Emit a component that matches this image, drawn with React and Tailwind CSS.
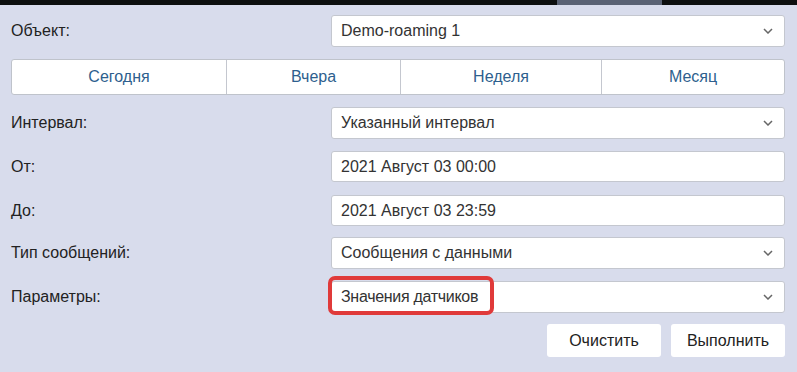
import React from "react";

const Chevron = () => (
  <svg width="10" height="6" viewBox="0 0 10 6" className="absolute right-[11px] top-1/2 -translate-y-1/2">
    <path d="M1 1l4 4 4-4" fill="none" stroke="#666" strokeWidth="1.5" />
  </svg>
);

const Select = ({ children }) => (
  <div className="relative flex h-[32px] w-[454px] items-center rounded-[3px] border border-[#c4c7cf] bg-white pl-[9px] text-[16px] text-[#333]">
    {children}
    <Chevron />
  </div>
);

const Input = ({ children }) => (
  <div className="flex h-[31px] w-[454px] items-center rounded-[3px] border border-[#c4c7cf] bg-white pl-[9px] text-[16px] text-[#333]">
    {children}
  </div>
);

const Row = ({ label, children, className = "" }) => (
  <div className={"flex items-center justify-between " + className}>
    <span className="text-[16px] text-[#222]">{label}</span>
    {children}
  </div>
);

export default function App() {
  return (
    <div className="h-[372px] w-[797px] overflow-hidden bg-[#d8dcec]" style={{ fontFamily: '"Liberation Sans", Arial, sans-serif' }}>
      <div className="flex h-[5px] bg-[#0d0f0f]">
        <div className="ml-[557px] h-full w-[105px] bg-[#5a6274]" />
      </div>
      <div className="flex flex-col pl-[11px] pr-[12px] pt-[10px]">
        <Row label="Объект:">
          <Select>Demo-roaming 1</Select>
        </Row>
        <div className="mt-[12px] flex h-[36px] overflow-hidden rounded-[3px] border border-[#bfc3cb] bg-white text-[16px] text-[#2e5f8e]">
          <div className="flex w-[215px] items-center justify-center border-r border-[#c4c7cf]">Сегодня</div>
          <div className="flex w-[174px] items-center justify-center border-r border-[#c4c7cf]">Вчера</div>
          <div className="flex w-[201px] items-center justify-center border-r border-[#c4c7cf]">Неделя</div>
          <div className="flex flex-1 items-center justify-center">Месяц</div>
        </div>
        <Row label="Интервал:" className="mt-[12px]">
          <Select>Указанный интервал</Select>
        </Row>
        <Row label="От:" className="mt-[12px]">
          <Input>2021 Август 03 00:00</Input>
        </Row>
        <Row label="До:" className="mt-[13px]">
          <Input>2021 Август 03 23:59</Input>
        </Row>
        <Row label="Тип сообщений:" className="mt-[11px]">
          <Select>Сообщения с данными</Select>
        </Row>
        <Row label="Параметры:" className="mt-[12px]">
          <div className="relative">
            <Select><span className="tracking-[-0.3px]">Значения датчиков</span></Select>
            <div className="absolute left-[-3px] top-[-5px] h-[39px] w-[166px] rounded-[7px] border-[4px] border-[#e03a3a]" />
          </div>
        </Row>
        <div className="mt-[11px] flex justify-end gap-[10px]">
          <div className="flex h-[33px] w-[114px] items-center justify-center rounded-[3px] bg-white text-[16px] text-[#222]">Очистить</div>
          <div className="flex h-[33px] w-[114px] items-center justify-center rounded-[3px] bg-white text-[16px] text-[#222]">Выполнить</div>
        </div>
      </div>
    </div>
  );
}
